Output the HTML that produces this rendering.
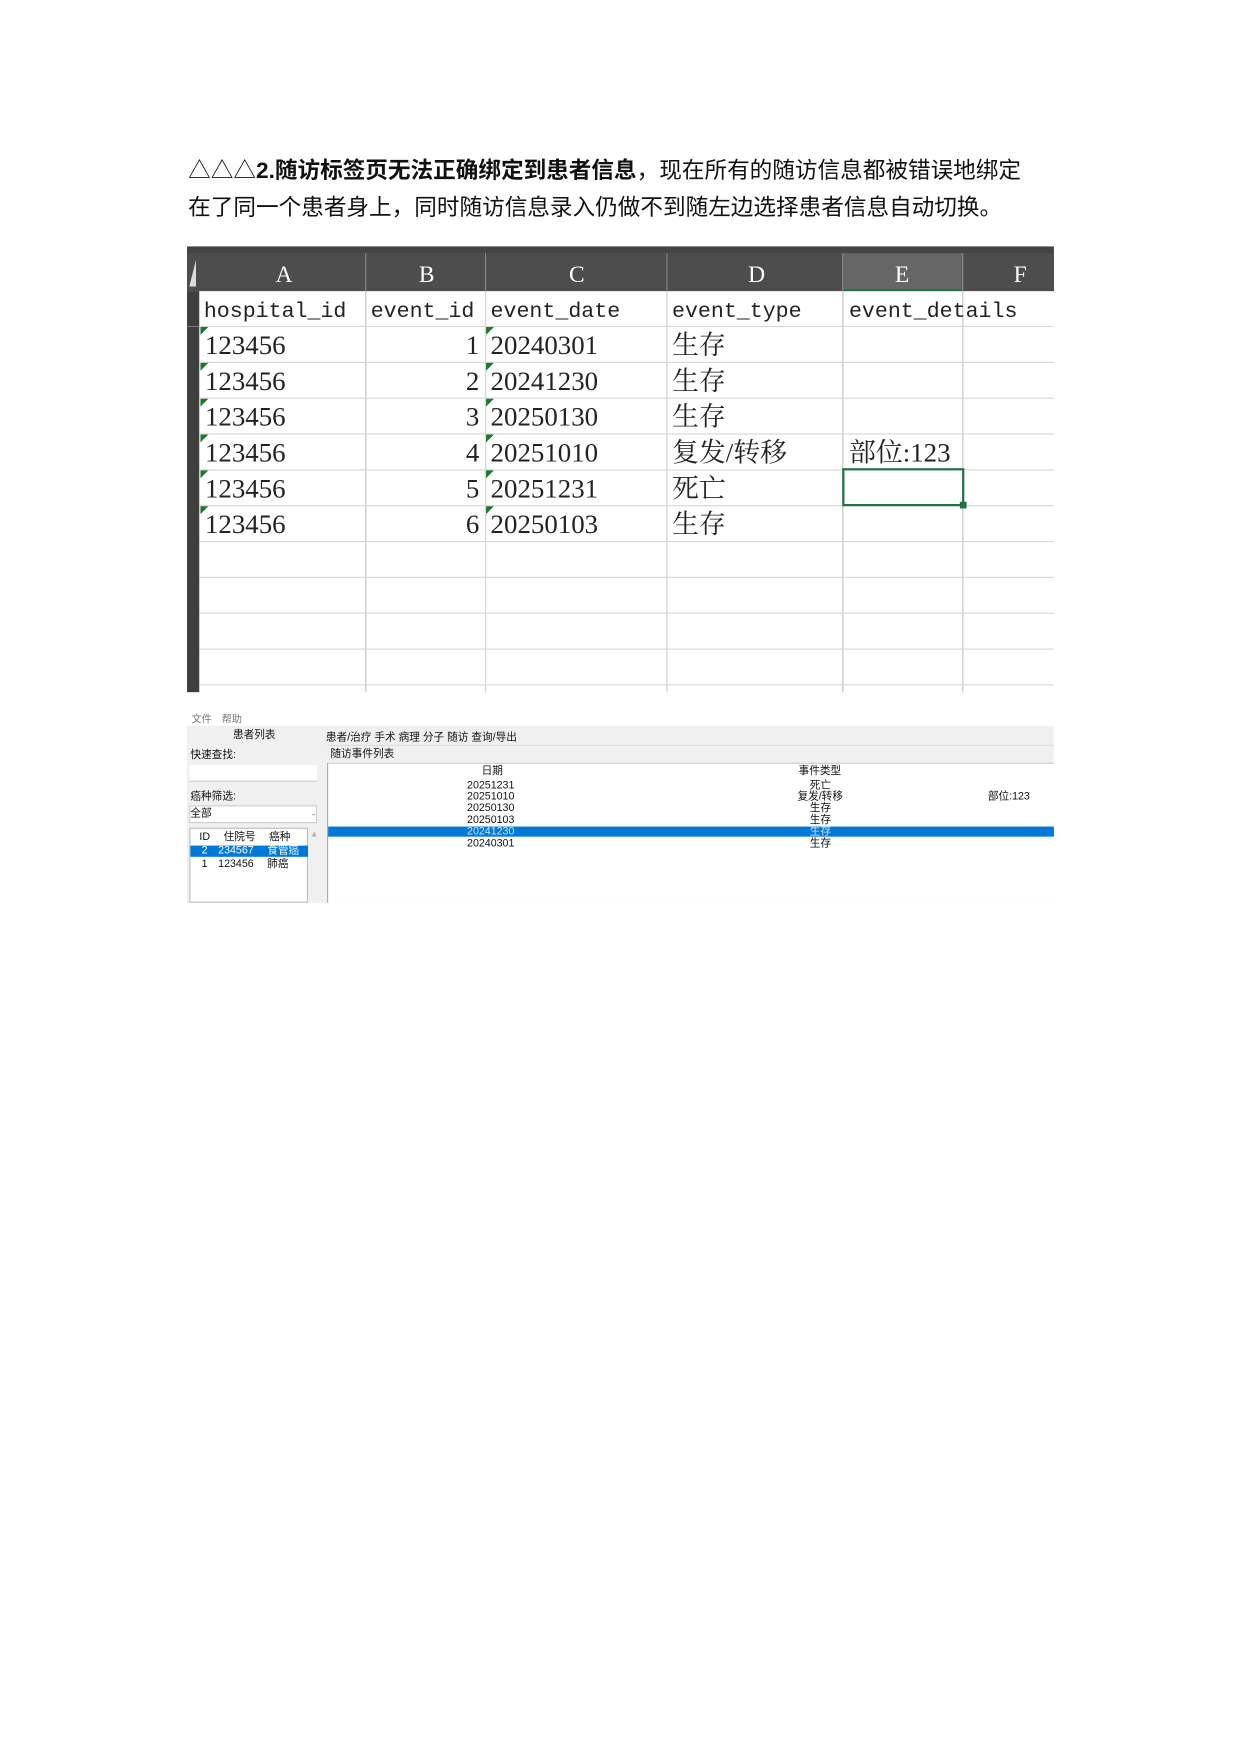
<!DOCTYPE html>
<html><head><meta charset="utf-8"><style>
*{margin:0;padding:0;box-sizing:border-box}
html,body{width:1241px;height:1754px;background:#fff;overflow:hidden}
#w{position:absolute;left:0;top:0;width:1110px;height:1570px;transform:scale(1.12);transform-origin:0 0;font-family:"Liberation Sans","Noto Sans CJK SC",sans-serif}
.a{position:absolute;white-space:nowrap}
.p{font-size:20.2px;color:#111;left:168px}
.cell{position:absolute;font-family:"Liberation Serif","Noto Serif CJK SC",serif;font-size:24px;color:#222;white-space:nowrap;line-height:32px}
.mono{font-family:"Liberation Mono","Noto Sans CJK SC",monospace;font-size:19.3px}
.hl{position:absolute;height:1px;background:#d6d6d6;left:178px;width:763px}
.vl{position:absolute;width:1px;background:#d6d6d6;top:260px;height:358px}
.tri{position:absolute;width:0;height:0;border-top:7px solid #1a7a2a;border-right:7px solid transparent}
.s{position:absolute;font-size:9.5px;color:#111;white-space:nowrap;line-height:10px}
</style></head><body><div id="w">
<div class="a p" style="top:136px">△△△<b>2.随访标签页无法正确绑定到患者信息</b>，现在所有的随访信息都被错误地绑定</div>
<div class="a p" style="top:169px">在了同一个患者身上，同时随访信息录入仍做不到随左边选择患者信息自动切换。</div>

<div class="a" style="left:167px;top:220px;width:774px;height:40px;background:#444"></div>
<div class="a" style="left:167px;top:226px;width:774px;height:34px;background:#4d4d4d"></div>
<div class="a" style="left:753px;top:226px;width:107px;height:34px;background:#666;border-bottom:2px solid #217346"></div>
<div class="a" style="left:167px;top:260px;width:11px;height:358px;background:#3e3e3e"></div>
<div class="a" style="left:169px;top:232px;width:6px;height:24px;background:#ddd;clip-path:polygon(100% 0,100% 100%,0 100%)"></div>
<div class="a" style="left:178px;top:260px;width:763px;height:358px;background:#fff"></div>
<div class="vl" style="left:326px;top:226px;height:392px;background:#888"></div>
<div class="vl" style="left:433px;top:226px;height:392px;background:#888"></div>
<div class="vl" style="left:595px;top:226px;height:392px;background:#888"></div>
<div class="vl" style="left:752px;top:226px;height:392px;background:#888"></div>
<div class="vl" style="left:859px;top:226px;height:392px;background:#888"></div>
<div class="vl" style="left:326px"></div><div class="vl" style="left:433px"></div><div class="vl" style="left:595px"></div><div class="vl" style="left:752px"></div><div class="vl" style="left:859px"></div>
<div class="cell" style="left:246px;top:229px;color:#fff;font-size:21px">A</div>
<div class="cell" style="left:374px;top:229px;color:#fff;font-size:21px">B</div>
<div class="cell" style="left:508px;top:229px;color:#fff;font-size:21px">C</div>
<div class="cell" style="left:668px;top:229px;color:#fff;font-size:21px">D</div>
<div class="cell" style="left:799px;top:229px;color:#fff;font-size:21px">E</div>
<div class="cell" style="left:905px;top:229px;color:#fff;font-size:21px">F</div>
<div class="hl" style="top:291px"></div><div class="hl" style="top:323px"></div><div class="hl" style="top:355px"></div><div class="hl" style="top:387px"></div><div class="hl" style="top:419px"></div><div class="hl" style="top:451px"></div><div class="hl" style="top:483px"></div><div class="hl" style="top:515px"></div><div class="hl" style="top:547px"></div><div class="hl" style="top:579px"></div><div class="hl" style="top:611px"></div>
<div class="a" style="left:167px;top:291px;width:11px;height:1px;background:#777"></div>
<div class="cell mono" style="left:182px;top:262px">hospital_id</div>
<div class="cell mono" style="left:331px;top:262px">event_id</div>
<div class="cell mono" style="left:438px;top:262px">event_date</div>
<div class="cell mono" style="left:600px;top:262px">event_type</div>
<div class="cell mono" style="left:758px;top:262px">event_details</div>

<div class="cell" style="left:183px;top:293px">123456</div><div class="cell" style="left:416px;top:293px">1</div><div class="cell" style="left:438px;top:293px">20240301</div><div class="cell" style="left:600px;top:293px">生存</div>
<div class="cell" style="left:183px;top:325px">123456</div><div class="cell" style="left:416px;top:325px">2</div><div class="cell" style="left:438px;top:325px">20241230</div><div class="cell" style="left:600px;top:325px">生存</div>
<div class="cell" style="left:183px;top:357px">123456</div><div class="cell" style="left:416px;top:357px">3</div><div class="cell" style="left:438px;top:357px">20250130</div><div class="cell" style="left:600px;top:357px">生存</div>
<div class="cell" style="left:183px;top:389px">123456</div><div class="cell" style="left:416px;top:389px">4</div><div class="cell" style="left:438px;top:389px">20251010</div><div class="cell" style="left:600px;top:389px">复发/转移</div><div class="cell" style="left:758px;top:389px">部位:123</div>
<div class="cell" style="left:183px;top:421px">123456</div><div class="cell" style="left:416px;top:421px">5</div><div class="cell" style="left:438px;top:421px">20251231</div><div class="cell" style="left:600px;top:421px">死亡</div>
<div class="cell" style="left:183px;top:453px">123456</div><div class="cell" style="left:416px;top:453px">6</div><div class="cell" style="left:438px;top:453px">20250103</div><div class="cell" style="left:600px;top:453px">生存</div>
<div class="tri" style="left:179px;top:292px"></div><div class="tri" style="left:434px;top:292px"></div>
<div class="tri" style="left:179px;top:324px"></div><div class="tri" style="left:434px;top:324px"></div>
<div class="tri" style="left:179px;top:356px"></div><div class="tri" style="left:434px;top:356px"></div>
<div class="tri" style="left:179px;top:388px"></div><div class="tri" style="left:434px;top:388px"></div>
<div class="tri" style="left:179px;top:420px"></div><div class="tri" style="left:434px;top:420px"></div>
<div class="tri" style="left:179px;top:452px"></div><div class="tri" style="left:434px;top:452px"></div>
<div class="a" style="left:752px;top:418px;width:109px;height:34px;border:2px solid #217346"></div>
<div class="a" style="left:857px;top:448px;width:6px;height:6px;background:#217346"></div>

<div class="s" style="left:171px;top:637px;color:#777;font-size:9px">文件　帮助</div>
<div class="a" style="left:167px;top:648px;width:774px;height:158px;background:#f0f0f0"></div>
<div class="s" style="left:208px;top:652px">患者列表</div>
<div class="s" style="left:170px;top:670px">快速查找:</div>
<div class="a" style="left:169px;top:683px;width:114px;height:15px;background:#fff;border-bottom:1px solid #ccc"></div>
<div class="s" style="left:170px;top:707px">癌种筛选:</div>
<div class="a" style="left:169px;top:719px;width:114px;height:16px;background:#fff;border:1px solid #ccc"></div>
<div class="s" style="left:170px;top:722px">全部</div>
<div class="s" style="left:277px;top:722px;color:#999;font-size:7px">⌄</div>
<div class="a" style="left:169px;top:739px;width:106px;height:67px;background:#fff;border:1px solid #bbb"></div>
<div class="s" style="left:178px;top:743px">ID　 住院号　 癌种</div>
<div class="a" style="left:170px;top:755px;width:105px;height:10px;background:#0078d7"></div>
<div class="s" style="left:180px;top:755px;color:#fff">2　234567　 食管癌</div>
<div class="s" style="left:180px;top:767px">1　123456　 肺癌</div>
<div class="a" style="left:275px;top:739px;width:17px;height:67px;background:#f0f0f0"></div>
<div class="s" style="left:277px;top:741px;color:#aaa;font-size:7px">▲</div>
<div class="s" style="left:291px;top:654px">患者/治疗 手术 病理 分子 随访 查询/导出</div>
<div class="a" style="left:292px;top:665px;width:649px;height:1px;background:#ddd"></div>
<div class="s" style="left:295px;top:669px">随访事件列表</div>
<div class="a" style="left:292px;top:681px;width:649px;height:125px;background:#fff;border-left:1px solid #aaa;border-top:1px solid #ccc"></div>
<div class="s" style="left:430px;top:684px">日期</div>
<div class="s" style="left:713px;top:684px">事件类型</div>
<div class="s" style="left:417px;top:697px">20251231</div><div class="s" style="left:723px;top:697px">死亡</div>
<div class="s" style="left:417px;top:707px">20251010</div><div class="s" style="left:712px;top:707px">复发/转移</div><div class="s" style="left:882px;top:707px">部位:123</div>
<div class="s" style="left:417px;top:717px">20250130</div><div class="s" style="left:723px;top:717px">生存</div>
<div class="s" style="left:417px;top:728px">20250103</div><div class="s" style="left:723px;top:728px">生存</div>
<div class="a" style="left:293px;top:738px;width:648px;height:9px;background:#0078d7"></div>
<div class="s" style="left:417px;top:738px;color:#cfe3f7">20241230</div><div class="s" style="left:723px;top:738px;color:#cfe3f7">生存</div>
<div class="s" style="left:417px;top:749px">20240301</div><div class="s" style="left:723px;top:749px">生存</div>
</div></body></html>
